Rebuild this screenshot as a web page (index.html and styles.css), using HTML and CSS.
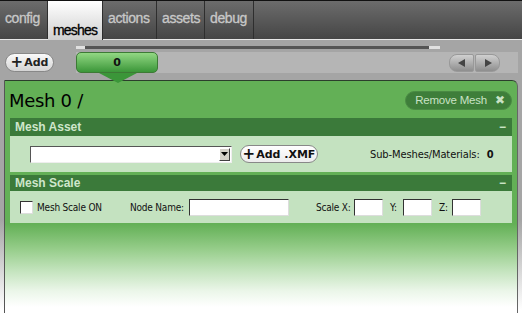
FILE: index.html
```html
<!DOCTYPE html>
<html lang="en">
<head>
  <meta charset="UTF-8">
  <title>Mesh Editor</title>
  <link rel="stylesheet" href="styles.css">
</head>
<body>
<div class="tabbar">
  <div class="tab t-config">config</div>
  <div class="tab t-meshes active">meshes</div>
  <div class="tab t-actions">actions</div>
  <div class="tab t-assets">assets</div>
  <div class="tab t-debug">debug</div>
</div>

<div class="toolbar">
  <div class="slider"><div class="slider-fill"></div></div>
  <div class="strip-row">
    <button class="add-btn"><span class="plus">+</span>Add</button>
    <div class="strip">
      <div class="mesh-tab">0</div>
      <div class="nav">
        <span class="nav-btn nav-left"><svg width="10" height="10" viewBox="0 0 10 10"><path d="M8 1 L1 5 L8 9 Z" fill="#444"/></svg></span>
        <span class="nav-btn nav-right"><svg width="10" height="10" viewBox="0 0 10 10"><path d="M2 1 L9 5 L2 9 Z" fill="#444"/></svg></span>
      </div>
    </div>
  </div>
</div>

<div class="panel">
  <div class="panel-head">
    <h1 class="mesh-title">Mesh 0 /</h1>
    <button class="remove-btn">Remove Mesh <span class="x">✖</span></button>
  </div>

  <div class="section">
    <div class="section-head"><span>Mesh Asset</span><span class="collapse">−</span></div>
    <div class="section-body asset-row">
      <div class="select"><span class="select-arrow"><svg width="7" height="4" viewBox="0 0 7 4"><path d="M0 0 L7 0 L3.5 4 Z" fill="#000"/></svg></span></div>
      <button class="xmf-btn"><span class="plus">+</span>Add .XMF</button>
      <div class="sub-count">Sub-Meshes/Materials: <b>0</b></div>
    </div>
  </div>

  <div class="section">
    <div class="section-head short"><span>Mesh Scale</span><span class="collapse">−</span></div>
    <div class="section-body scale-row">
      <label class="check"><span class="box"></span>Mesh Scale ON</label>
      <span class="lbl l-node">Node Name:</span><span class="input w100"></span>
      <span class="lbl l-scale">Scale X:</span><span class="input w29"></span>
      <span class="lbl l-axis">Y:</span><span class="input w29"></span>
      <span class="lbl l-axis">Z:</span><span class="input w29"></span>
    </div>
  </div>
</div>
</body>
</html>
```

FILE: styles.css
```css
body { margin: 0; height: 333px; overflow: hidden; font-family: "DejaVu Sans", Verdana, sans-serif; background: linear-gradient(to bottom, #a5a5a5 0, #a5a5a5 220px, #fff 310px); }

.tabbar { display: flex; height: 38px; border-top: 1px solid #111; border-bottom: 1px solid #e6e6e6; background: linear-gradient(to bottom, #6c6c6c, #454545); }
.tab { box-sizing: border-box; padding: 9px 0 0 5px; font-family: "Liberation Sans", Arial, sans-serif; font-size: 14px; color: #c8c8c8; border-right: 1px solid #2e2e2e; letter-spacing: -0.4px; -webkit-text-stroke: 0.3px #c8c8c8; white-space: nowrap; }
.t-config { width: 48px; }
.t-meshes { width: 55px; letter-spacing: -0.8px; }
.t-actions { width: 54px; }
.t-assets { width: 48px; }
.t-debug { width: 49px; }
.tab.active { background: linear-gradient(to bottom, #ffffff, #cfcfcf); color: #000; -webkit-text-stroke: 0.3px #000; padding-top: 21px; margin-bottom: -1px; }

.toolbar { height: 40px; padding-top: 6px; box-sizing: border-box; }
.slider { margin-left: 76px; width: 364px; height: 3px; background: #e0e0e0; }
.slider-fill { margin-left: 9px; width: 344px; height: 3px; background: #555; }

.strip-row { display: flex; align-items: center; margin-top: 3px; height: 21px; }
.add-btn { margin-left: 5px; width: 49px; height: 19px; padding: 0; border: 1px solid #888; border-radius: 10px; background: linear-gradient(to bottom, #fafafa, #d4d4d4); font-family: "DejaVu Sans", sans-serif; font-size: 11px; font-weight: bold; color: #222; display: flex; align-items: center; justify-content: center; }
.plus { font-size: 15px; font-weight: bold; margin-right: 1px; line-height: 1; }
.strip { margin-left: 22px; width: 442px; height: 21px; background: #b5b5b5; display: flex; align-items: center; justify-content: space-between; }
.mesh-tab { position: relative; width: 80px; height: 19px; border: 1px solid #3d7a35; border-radius: 5px; background: linear-gradient(to bottom, #92d883, #3b9639); text-align: center; font-size: 11px; font-weight: bold; line-height: 19px; color: #111; }
.mesh-tab::after { content: ""; position: absolute; left: 22px; top: 20px; border-left: 19px solid transparent; border-right: 19px solid transparent; border-top: 10px solid #3b9639; }
.nav { display: flex; margin-right: 18px; }
.nav-btn { width: 23px; height: 16px; display: flex; align-items: center; justify-content: center; background: linear-gradient(to bottom, #d0d0d0, #8e8e8e); border: 1px solid #999; }
.nav-left { border-radius: 8px 2px 2px 8px; }
.nav-right { border-radius: 2px 8px 8px 2px; margin-left: 1px; }

.panel { margin: 0 4px; height: 232px; border-top: 1px solid #2c3e2c; border-left: 1px solid #555; border-right: 1px solid #666; border-radius: 0 6px 0 0; background-color: #fff; background-image: linear-gradient(to bottom, #63b056 0, #63b056 143px, #96cd8a 168px, #c4e4be 190px, #ebf6e9 210px, #ffffff 226px); }
.panel-head { display: flex; justify-content: space-between; align-items: center; height: 37px; padding: 0 5px 0 4px; }
.mesh-title { margin: 2px 0 0 0; font-size: 18px; font-weight: normal; color: #000; letter-spacing: -0.3px; }
.remove-btn { height: 19px; width: 107px; padding: 0 0 0 3px; border: 1px solid #4a8a44; border-radius: 10px; background: #3e7e3a; color: #c9e2c5; font-family: "Liberation Sans", Arial, sans-serif; font-size: 11.5px; letter-spacing: -0.2px; margin-top: 1px; }
.remove-btn .x { font-size: 12px; margin-left: 5px; }

.section { margin: 0 5px 3px 5px; }
.section-head { display: flex; justify-content: space-between; height: 18px; line-height: 18px; padding: 0 6px 0 5px; background: #3b7a3a; color: #cfe6cb; font-family: "Liberation Sans", Arial, sans-serif; font-size: 12px; font-weight: bold; }
.section-head.short { height: 16px; line-height: 16px; }
.collapse { font-weight: bold; }
.section-body { background: #c4e2c0; display: flex; align-items: center; font-family: "DejaVu Sans Condensed", "DejaVu Sans", sans-serif; font-size: 10px; letter-spacing: -0.2px; color: #111; }

.asset-row { height: 36px; }
.select { margin-left: 20px; width: 200px; height: 15px; background: #fff; border: 1px solid; border-color: #555 #eee #eee #555; display: flex; justify-content: flex-end; }
.select-arrow { width: 11px; height: 13px; margin: 1px; background: #d4d0c8; border: 1px solid; border-color: #fff #404040 #404040 #fff; box-sizing: border-box; display: flex; align-items: center; justify-content: center; }
.xmf-btn { margin-left: 8px; width: 78px; height: 18px; padding: 0; border: 1px solid #888; border-radius: 10px; background: linear-gradient(to bottom, #ffffff, #ececec); font-family: "DejaVu Sans", sans-serif; font-size: 11px; font-weight: bold; color: #111; display: flex; align-items: center; justify-content: center; }
.sub-count { margin-left: 52px; font-size: 11px; letter-spacing: -0.1px; }
.sub-count b { margin-left: 4px; }

.scale-row { height: 32px; }
.check { display: flex; align-items: center; margin-left: 10px; width: 110px; }
.box { width: 11px; height: 11px; background: #fff; border: 1px solid; border-color: #333 #ddd #ddd #333; margin-right: 4px; }
.lbl { display: inline-block; }
.l-node { width: 59px; }
.l-scale { width: 38px; margin-left: 27px; }
.l-axis { width: 13px; margin-left: 7px; }
.input { height: 15px; background: #fff; border: 1px solid; border-color: #333 #ddd #ddd #333; }
.w100 { width: 98px; }
.w29 { width: 27px; }
```
